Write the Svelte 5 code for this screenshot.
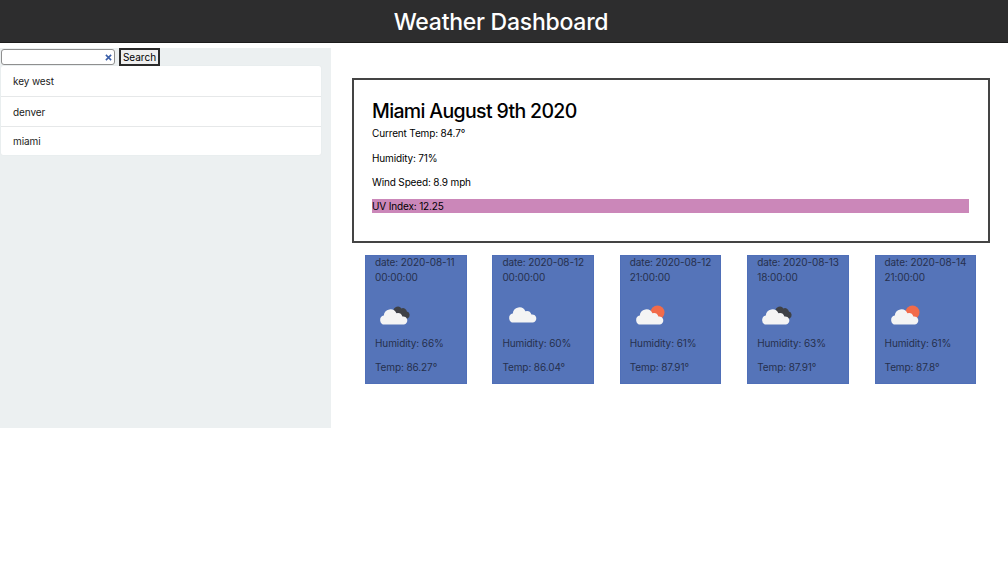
<script>
	const cities = ['key west', 'denver', 'miami'];
	const forecast = [
		{ date: '2020-08-11', time: '00:00:00', icon: 'night', humidity: '66%', temp: '86.27°' },
		{ date: '2020-08-12', time: '00:00:00', icon: 'plain', humidity: '60%', temp: '86.04°' },
		{ date: '2020-08-12', time: '21:00:00', icon: 'sun', humidity: '61%', temp: '87.91°' },
		{ date: '2020-08-13', time: '18:00:00', icon: 'night', humidity: '63%', temp: '87.91°' },
		{ date: '2020-08-14', time: '21:00:00', icon: 'sun', humidity: '61%', temp: '87.8°' }
	];
</script>

<header>
	<h1>Weather Dashboard</h1>
</header>

<div class="page">
	<aside>
		<form class="search" onsubmit={(e) => e.preventDefault()}>
			<div class="field">
				<input type="text" aria-label="City" />
				<svg viewBox="0 0 8 8" width="7" height="7" aria-hidden="true">
					<path d="m1 1 6 6M7 1 1 7" fill="none" stroke="#3a5ea8" stroke-width="1.8" />
				</svg>
			</div>
			<button type="submit">Search</button>
		</form>
		<ul>
			{#each cities as city}
				<li>{city}</li>
			{/each}
		</ul>
	</aside>

	<main>
		<section class="today">
			<h2>Miami August 9th 2020</h2>
			<p>Current Temp: 84.7°</p>
			<p>Humidity: 71%</p>
			<p>Wind Speed: 8.9 mph</p>
			<p class="uv">UV Index: 12.25</p>
		</section>

		<div class="cards">
			{#each forecast as day}
				<article>
					<p class="date">date: {day.date}<br />{day.time}</p>
					<svg class="icon {day.icon}" viewBox="0 0 36 24" width="36" height="24" aria-hidden="true">
						{#if day.icon === 'sun'}
							<circle cx="22.5" cy="9.5" r="7" fill="#f26b4a" />
						{:else if day.icon === 'night'}
							<path
								d="M14.5 8a4.4 4.4 0 0 1 8-2.6 4 4 0 0 1 5.4 3.2 3.6 3.6 0 0 1 .6 6.8c-1.6.6-3.2.4-4.4-.4z"
								fill="#3f4146"
							/>
						{/if}
						<path
							d="M5.6 21.6a4.6 4.6 0 0 1-.8-9.1 6.6 6.6 0 0 1 12.6-2.2 5 5 0 0 1 6 3.2 4.1 4.1 0 0 1 1.6 8.1z"
							fill="#f4f4f4"
						/>
					</svg>
					<p>Humidity: {day.humidity}</p>
					<p>Temp: {day.temp}</p>
				</article>
			{/each}
		</div>
	</main>
</div>

<style>
	:global(body) {
		background: #fff;
		color: #000;
		font-family: Inter, 'Liberation Sans', sans-serif;
	}

	header {
		height: 42px;
		background: #2d2d2e;
		border-bottom: 1px solid #1c1c1c;
		display: flex;
		align-items: center;
		justify-content: center;
	}

	h1 {
		margin: 2px 6px 0 0;
		color: #fff;
		font-size: 23px;
		font-weight: 500;
		letter-spacing: -0.25px;
	}

	.page {
		display: grid;
		grid-template-columns: 331px 1fr;
		align-items: start;
		padding-top: 5px;
	}

	aside {
		height: 380px;
		background: #ecf0f1;
	}

	.search {
		display: flex;
		align-items: flex-start;
		gap: 4px;
		padding-left: 1px;
		height: 18px;
	}

	.field {
		position: relative;
		width: 114px;
		height: 16px;
		margin-top: 1px;
	}

	input {
		display: block;
		box-sizing: border-box;
		width: 100%;
		height: 100%;
		border: 1px solid #8f8f8f;
		border-radius: 3px;
		background: #fff;
		padding: 0;
	}

	.field svg {
		position: absolute;
		right: 3px;
		top: 5px;
	}

	button {
		box-sizing: border-box;
		width: 41px;
		height: 18px;
		padding: 0;
		border: 2px solid #2a2a2a;
		background: #efefef;
		color: #000;
		font: 10px Inter, 'Liberation Sans', sans-serif;
	}

	ul {
		width: 320px;
		margin: 0 0 0 1px;
		padding: 0;
		list-style: none;
		background: #fff;
		border-radius: 2px;
		box-shadow: 0 0 1px #d8dcdd;
	}

	li {
		box-sizing: border-box;
		height: 30px;
		padding-left: 12px;
		display: flex;
		align-items: center;
		font-size: 10px;
		letter-spacing: -0.1px;
		color: #1b1b1b;
	}

	li + li {
		border-top: 1px solid #e6e8e9;
	}

	li:last-child {
		height: 29px;
	}

	main {
		padding: 30px 18px 0 21px;
	}

	.today {
		box-sizing: border-box;
		height: 165px;
		border: 2px solid #444;
		padding: 19px 19px 0 18px;
	}

	h2 {
		margin: 0 0 4px;
		font-size: 19.5px;
		font-weight: 450;
		letter-spacing: -0.65px;
		line-height: 24px;
	}

	.today p {
		margin: 0 0 11.5px;
		font-size: 10px;
		letter-spacing: -0.15px;
		line-height: 13px;
	}

	.today .uv {
		background: #cb87b9;
		height: 14px;
		line-height: 14px;
		margin: -2px 0 0;
	}

	.cards {
		display: grid;
		grid-template-columns: repeat(5, 101.5px);
		justify-content: space-between;
		margin: 12px 13.9px 0 13px;
	}

	article {
		box-sizing: border-box;
		height: 129px;
		background: #5574b9;
		border: 1px solid #4f6fb8;
		padding: 0 9px;
		color: #26304d;
		font-size: 10px;
		letter-spacing: -0.1px;
		line-height: 15px;
	}

	article p {
		margin: 0 0 9px;
	}

	article .date {
		margin: -1px 0 0;
		white-space: nowrap;
	}

	.icon {
		display: block;
		margin: 18px 0 9px 4px;
	}

	.icon.plain {
		transform: translate(2px, -2px);
	}

	.icon.sun {
		transform: translateX(1px);
	}
</style>
